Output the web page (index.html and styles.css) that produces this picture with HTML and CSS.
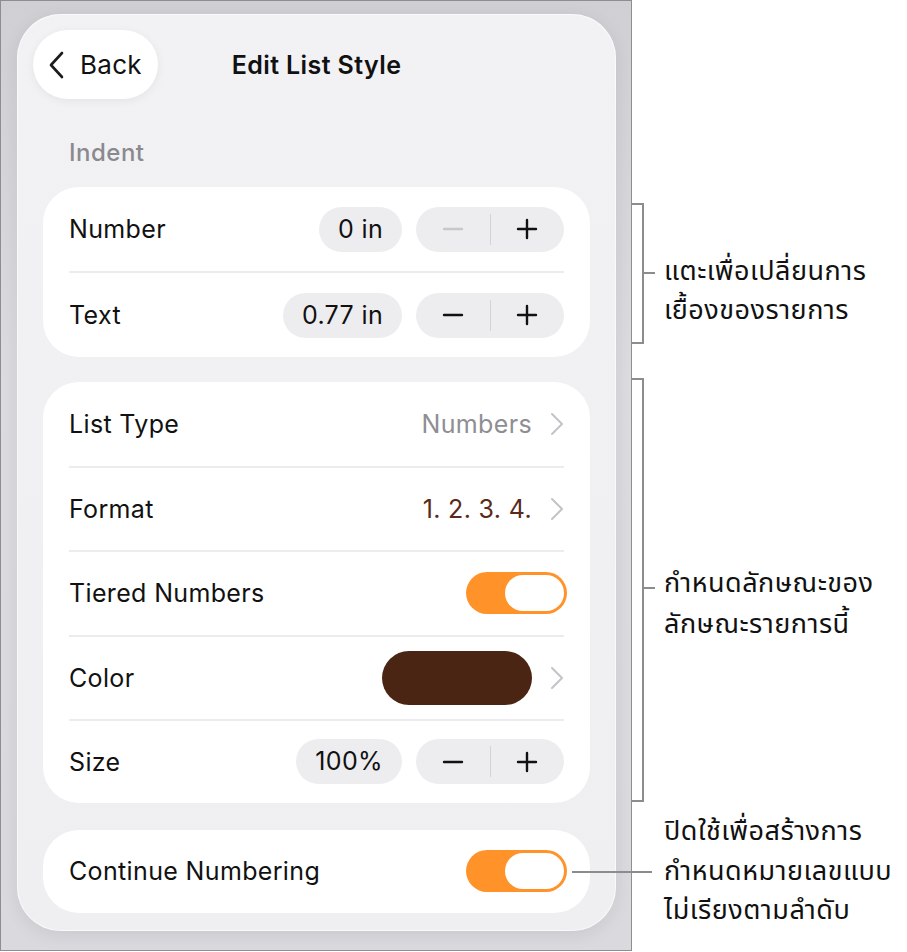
FILE: index.html
```html
<!DOCTYPE html>
<html lang="en">
<head>
<meta charset="utf-8">
<title>Edit List Style</title>
<link rel="stylesheet" href="styles.css">
</head>
<body>
<div class="page">
  <div class="device">
    <div class="panel">
      <header class="header">
        <button class="back">
          <svg class="back-icon" width="20" height="28" viewBox="0 0 20 28"><path d="M15 2 L4 14 L15 26" fill="none" stroke="#1c1c1e" stroke-width="2.6" stroke-linecap="round" stroke-linejoin="round"/></svg>
          <span>Back</span>
        </button>
        <h1 class="title">Edit List Style</h1>
        <span></span>
      </header>

      <div class="section-label">Indent</div>

      <section class="card card-indent">
        <div class="row">
          <span class="label">Number</span>
          <div class="controls">
            <span class="value-pill">0 in</span>
            <div class="stepper">
              <span class="step"><svg width="22" height="22" viewBox="0 0 22 22"><path d="M2 11 H20" stroke="#c7c7cc" stroke-width="2.4" stroke-linecap="round"/></svg></span>
              <span class="step-divider"></span>
              <span class="step"><svg width="22" height="22" viewBox="0 0 22 22"><path d="M2 11 H20 M11 2 V20" stroke="#111" stroke-width="2.4" stroke-linecap="round"/></svg></span>
            </div>
          </div>
        </div>
        <div class="row">
          <span class="label">Text</span>
          <div class="controls">
            <span class="value-pill">0.77 in</span>
            <div class="stepper">
              <span class="step"><svg width="22" height="22" viewBox="0 0 22 22"><path d="M2 11 H20" stroke="#111" stroke-width="2.4" stroke-linecap="round"/></svg></span>
              <span class="step-divider"></span>
              <span class="step"><svg width="22" height="22" viewBox="0 0 22 22"><path d="M2 11 H20 M11 2 V20" stroke="#111" stroke-width="2.4" stroke-linecap="round"/></svg></span>
            </div>
          </div>
        </div>
      </section>

      <section class="card card-list">
        <div class="row">
          <span class="label">List Type</span>
          <div class="controls">
            <span class="detail">Numbers</span>
            <svg class="chev" width="14" height="24" viewBox="0 0 14 24"><path d="M2 2 L12 12 L2 22" fill="none" stroke="#c4c4c8" stroke-width="2" stroke-linecap="round" stroke-linejoin="round"/></svg>
          </div>
        </div>
        <div class="row">
          <span class="label">Format</span>
          <div class="controls">
            <span class="detail brown">1. 2. 3. 4.</span>
            <svg class="chev" width="14" height="24" viewBox="0 0 14 24"><path d="M2 2 L12 12 L2 22" fill="none" stroke="#c4c4c8" stroke-width="2" stroke-linecap="round" stroke-linejoin="round"/></svg>
          </div>
        </div>
        <div class="row">
          <span class="label">Tiered Numbers</span>
          <div class="controls">
            <span class="toggle"><span class="knob"></span></span>
          </div>
        </div>
        <div class="row">
          <span class="label">Color</span>
          <div class="controls">
            <span class="swatch"></span>
            <svg class="chev" width="14" height="24" viewBox="0 0 14 24"><path d="M2 2 L12 12 L2 22" fill="none" stroke="#c4c4c8" stroke-width="2" stroke-linecap="round" stroke-linejoin="round"/></svg>
          </div>
        </div>
        <div class="row">
          <span class="label">Size</span>
          <div class="controls">
            <span class="value-pill">100%</span>
            <div class="stepper">
              <span class="step"><svg width="22" height="22" viewBox="0 0 22 22"><path d="M2 11 H20" stroke="#111" stroke-width="2.4" stroke-linecap="round"/></svg></span>
              <span class="step-divider"></span>
              <span class="step"><svg width="22" height="22" viewBox="0 0 22 22"><path d="M2 11 H20 M11 2 V20" stroke="#111" stroke-width="2.4" stroke-linecap="round"/></svg></span>
            </div>
          </div>
        </div>
      </section>

      <section class="card card-single">
        <div class="row">
          <span class="label">Continue Numbering</span>
          <div class="controls">
            <span class="toggle"><span class="knob"></span></span>
          </div>
        </div>
      </section>
    </div>
  </div>

  <div class="notes">
    <div class="bracket b1"><span class="tick"></span></div>
    <p class="note n1">แตะเพื่อเปลี่ยนการ<br>เยื้องของรายการ</p>

    <div class="bracket b2"><span class="tick"></span></div>
    <p class="note n2">กำหนดลักษณะของ<br>ลักษณะรายการนี้</p>

    <div class="leader"></div>
    <p class="note n3">ปิดใช้เพื่อสร้างการ<br>กำหนดหมายเลขแบบ<br>ไม่เรียงตามลำดับ</p>
  </div>
</div>
</body>
</html>
```

FILE: styles.css
```css
* { box-sizing: border-box; }

html, body {
  margin: 0;
  padding: 0;
  background: #ffffff;
}

body {
  font-family: Inter, "Noto Sans", "Noto Sans Thai", "DejaVu Sans", sans-serif;
  color: #111111;
}

.page {
  position: relative;
  width: 907px;
  height: 952px;
}

.device {
  width: 632px;
  height: 951px;
  border: 1px solid #8e8e92;
  background: linear-gradient(180deg, #cfcfd4 0%, #dcdce0 40%, #d9d9de 100%);
  padding: 13px 15px 0 16px;
}

.panel {
  width: 599px;
  height: 917px;
  border-radius: 44px;
  background: linear-gradient(180deg, #f2f2f5 0%, #f0f0f3 60%, #efeff2 100%);
  box-shadow: 0 0 0 1px rgba(255,255,255,0.6) inset, 0 4px 18px rgba(0,0,0,0.08);
  padding: 16px 26px 0 26px;
  display: flex;
  flex-direction: column;
}

.header {
  display: grid;
  grid-template-columns: 1fr auto 1fr;
  align-items: center;
  height: 69px;
  margin-left: -10px;
}

.back {
  justify-self: start;
  display: flex;
  align-items: center;
  gap: 13px;
  height: 69px;
  padding: 0 16px 0 14px;
  border: none;
  border-radius: 35px;
  background: #ffffff;
  box-shadow: 0 2px 10px rgba(0,0,0,0.06);
  font-family: inherit;
  font-size: 26px;
  letter-spacing: 0.3px;
  color: #111;
}

.back-icon { display: block; }

.title {
  margin: 0;
  font-size: 25px;
  font-weight: 600;
  letter-spacing: 0.4px;
  color: #111;
  margin-left: 10px;
}

.section-label {
  margin-top: 37px;
  padding-left: 26px;
  height: 34px;
  font-size: 24px;
  font-weight: 500;
  letter-spacing: 0.5px;
  color: #8a8a8e;
  line-height: 34px;
}

.card {
  background: #ffffff;
  border-radius: 36px;
  padding: 0 26px;
  margin-top: 17px;
}

.card-list { margin-top: 25px; }
.card-single { margin-top: 27px; }

.row {
  display: flex;
  align-items: center;
  justify-content: space-between;
  height: 85px;
}

.row + .row { border-top: 2px solid #ececef; }

.card-indent .row { height: 84px; }
.card-indent .row + .row { height: 86px; }
.card-list .row { height: 84.2px; }
.card-single .row { height: 83px; }

.label {
  font-size: 25px;
  letter-spacing: 0.35px;
  color: #111;
}

.controls {
  display: flex;
  align-items: center;
  gap: 14px;
}

.value-pill {
  height: 45px;
  padding: 0 19px;
  border-radius: 23px;
  background: #ededef;
  font-size: 25px;
  letter-spacing: 0.35px;
  line-height: 45px;
  color: #111;
}

.stepper {
  display: flex;
  align-items: center;
  width: 148px;
  height: 45px;
  border-radius: 23px;
  background: #ededef;
}

.step {
  flex: 1;
  display: flex;
  align-items: center;
  justify-content: center;
}

.step svg { display: block; }

.step-divider {
  width: 1px;
  height: 31px;
  background: #d4d4d7;
}

.detail {
  font-size: 25px;
  letter-spacing: 0.35px;
  color: #8e8e93;
}

.detail.brown { color: #5a2a1a; }

.controls .chev {
  display: block;
  margin-left: 4px;
  margin-right: 0;
}

.toggle {
  display: flex;
  align-items: center;
  justify-content: flex-end;
  width: 101px;
  height: 42px;
  border-radius: 21px;
  background: #ff9229;
  padding: 3px;
  margin-right: -3px;
}

.knob {
  width: 59px;
  height: 36px;
  border-radius: 18px;
  background: #ffffff;
}

.swatch {
  width: 150px;
  height: 54px;
  border-radius: 27px;
  background: #4a2514;
}

/* annotation layer */
.notes {
  position: absolute;
  inset: 0;
  pointer-events: none;
}

.bracket {
  position: absolute;
  left: 632px;
  width: 12px;
  border: 2px solid #8c8c8c;
  border-left: none;
}

.bracket .tick {
  position: absolute;
  left: 10px;
  width: 13px;
  height: 2px;
  background: #8c8c8c;
}

.b1 { top: 203px; height: 141px; }
.b1 .tick { top: 67px; }

.b2 { top: 378px; height: 424px; }
.b2 .tick { top: 207px; }

.leader {
  position: absolute;
  left: 572px;
  top: 871px;
  width: 80px;
  height: 2px;
  background: #8c8c8c;
}

.note {
  position: absolute;
  left: 664px;
  margin: 0;
  font-family: "Noto Sans Thai", "Noto Sans", "DejaVu Sans", sans-serif;
  font-size: 27px;
  letter-spacing: 0.5px;
  line-height: 39px;
  color: #111;
}

.n1 { top: 252px; }
.n2 { top: 563px; line-height: 41px; }
.n3 { top: 812px; line-height: 39.5px; }
```
